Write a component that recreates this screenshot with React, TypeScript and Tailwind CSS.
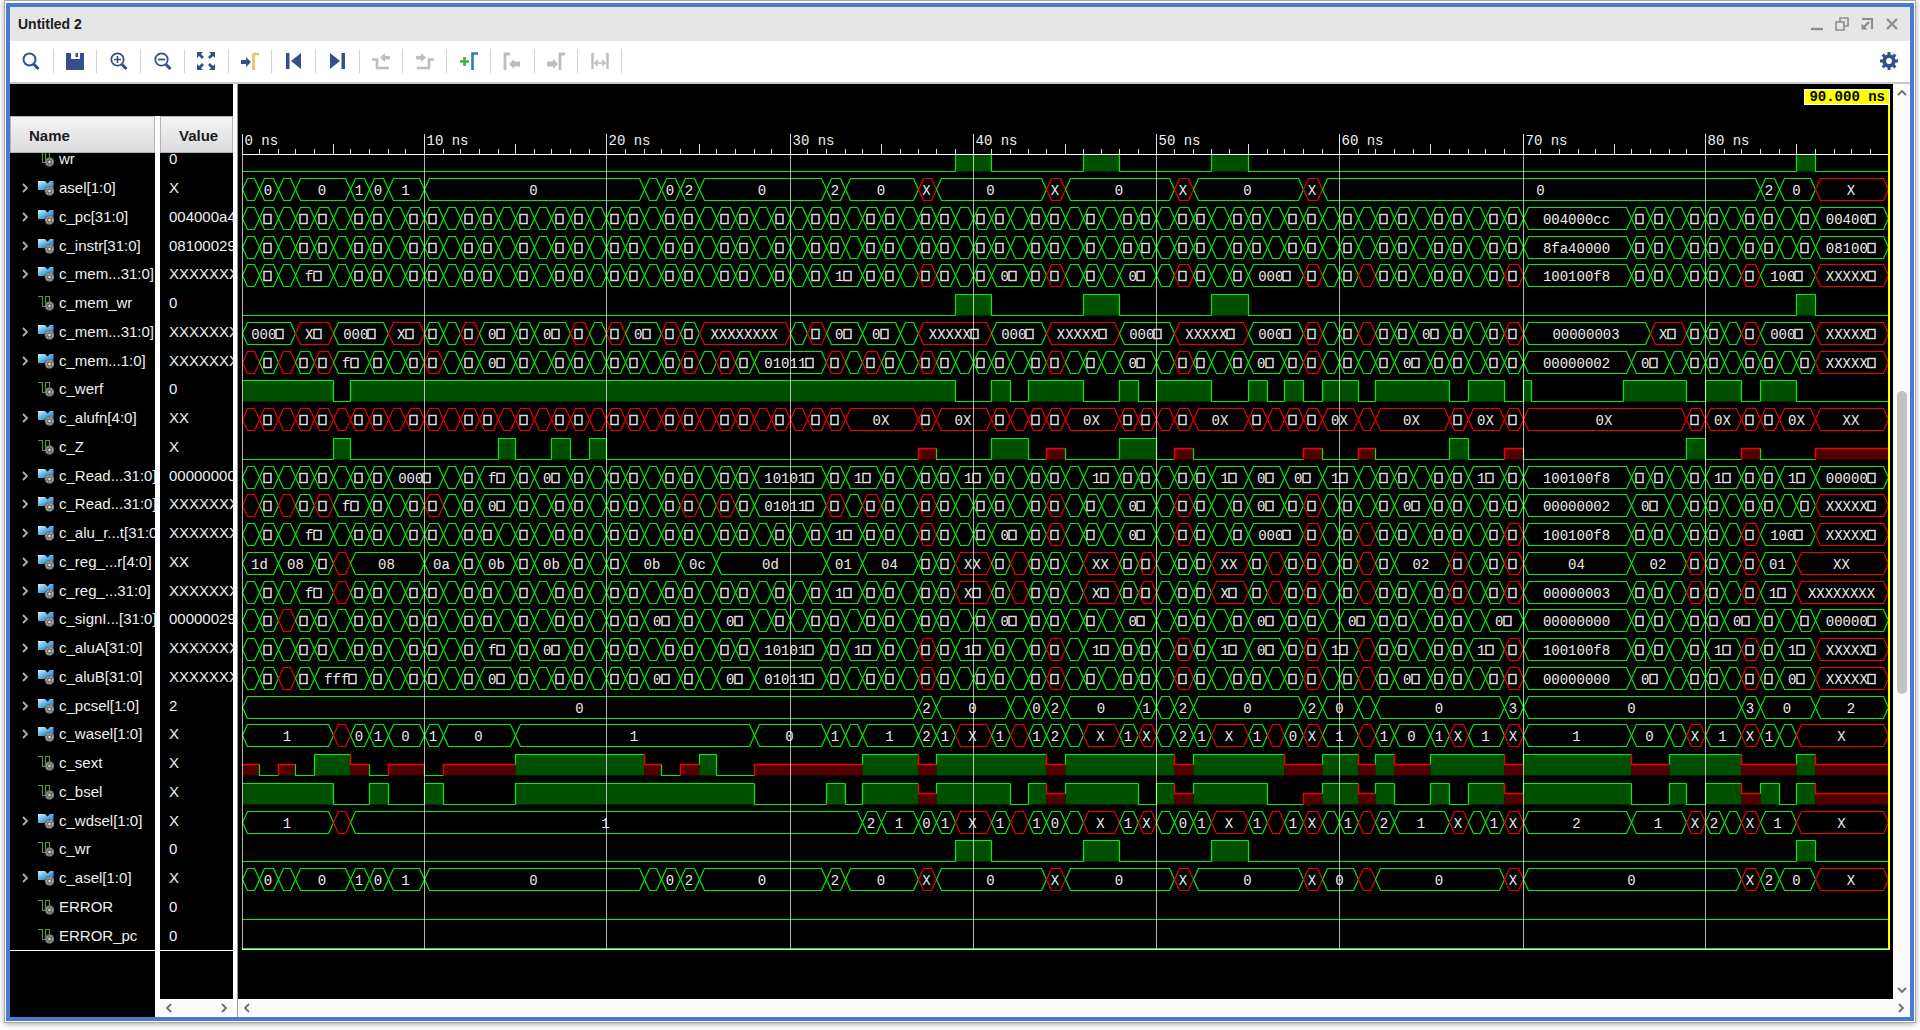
import { useLayoutEffect, useRef, useState } from "react";
import type { ReactNode } from "react";

type Signal = { name: string; value: string; kind: "bus" | "bit"; wave: string };

/*
 * Bus waves:  "*n" is n one-step values, "n:text" one value that lasts n steps, a leading
 *             "r" marks an undefined value.
 * Bit waves:  H, L or X followed by the number of steps.
 */
const WRITE_WAVE = "L39 H2 L5 H2 L5 H2 L30 H1 L4";
const ADDRESS_WAVE =
  "*3 2:f□ *27 2:1□ *3 r*1 *3 2:0□ *1 r*1 *3 2:0□ *1 r*1 *3 3:000□ r*1 *2 r*1 *7 r*1 6:100100f8 *6 r*1 3:100□ r4:XXXXX□";
const OPERAND_WAVE =
  "r*1 *1 r*1 *1 r*1 2:f□ *3 r*1 *2 2:0□ *9 r*1 *1 r*1 *1 4:01011□ r*1 *1 r*1 *2 r*1 *6 r*1 *3 2:0□ *1 r*1 *3 2:0□ *1 r*1 *4 2:0□ *5 6:00000002 2:0□ *8 r4:XXXXX□";

const SIGNALS: Signal[] = [
  { name: "wr", value: "0", kind: "bit", wave: WRITE_WAVE },
  {
    name: "asel[1:0]", value: "X", kind: "bus",
    wave: "1: 1:0 1: 3:0 1:1 1:0 2:1 12:0 1: 1:0 1:2 7:0 1:2 4:0 r1:X 6:0 r1:X 6:0 r1:X 6:0 r1:X 24:0 1:2 2:0 r4:X",
  },
  { name: "c_pc[31:0]", value: "004000a4", kind: "bus", wave: "*70 6:004000cc *10 4:00400□" },
  { name: "c_instr[31:0]", value: "08100029", kind: "bus", wave: "*70 6:8fa40000 *10 4:08100□" },
  { name: "c_mem...31:0]", value: "XXXXXXXX", kind: "bus", wave: ADDRESS_WAVE },
  { name: "c_mem_wr", value: "0", kind: "bit", wave: WRITE_WAVE },
  {
    name: "c_mem...31:0]", value: "XXXXXXXX", kind: "bus",
    wave: "3:000□ r2:X□ 3:000□ r2:X□ *2 r*1 2:0□ *1 2:0□ r*1 *1 r*1 2:0□ r*1 *1 r5:XXXXXXXX *1 r*1 2:0□ 2:0□ *1 r4:XXXXX□ 3:000□ r4:XXXXX□ 3:000□ r4:XXXXX□ 3:000□ r*1 *2 r*1 *2 2:0□ *3 r*1 7:00000003 r2:X□ *3 r*1 3:000□ r4:XXXXX□",
  },
  { name: "c_mem...1:0]", value: "XXXXXXXX", kind: "bus", wave: OPERAND_WAVE },
  {
    name: "c_werf", value: "0", kind: "bit",
    wave: "H5 L1 H33 L2 H1 L1 H3 L2 H1 L1 H3 L2 H1 L1 H1 L1 H2 L1 H4 L1 H2 L1 H0.5 L5 H3.5 L1 H2 L1 H2 L5",
  },
  {
    name: "c_alufn[4:0]", value: "XX", kind: "bus",
    wave: "r*33 r4:0X r*1 r3:0X r*4 r3:0X r*4 r3:0X r*4 r2:0X r*1 r4:0X r*1 r2:0X r*1 r9:0X r*1 r2:0X r*2 r2:0X r4:XX",
  },
  {
    name: "c_Z", value: "X", kind: "bit",
    wave: "L5 H1 L8 H1 L2 H1 L1 H1 L17 X1 L3 H2 L1 X1 L3 H2 L1 X1 L6 X1 L2 X1 L4 H1 L2 X1 L9 H1 L2 X1 L3 X4",
  },
  {
    name: "c_Read...31:0]", value: "00000000", kind: "bus",
    wave: "*8 3:000□ *2 2:f□ *1 2:0□ *10 4:10101□ *1 2:1□ *4 2:1□ *5 2:1□ *5 2:1□ 2:0□ 2:0□ 2:1□ *6 2:1□ *1 6:100100f8 *4 2:1□ *2 2:1□ 4:00000□",
  },
  { name: "c_Read...31:0]", value: "XXXXXXXX", kind: "bus", wave: OPERAND_WAVE },
  { name: "c_alu_r...t[31:0]", value: "XXXXXXXX", kind: "bus", wave: ADDRESS_WAVE },
  {
    name: "c_reg_...r[4:0]", value: "XX", kind: "bus",
    wave: "2:1d 2:08 *1 r*1 4:08 2:0a *1 2:0b *1 2:0b *3 3:0b 2:0c 6:0d 2:01 3:04 *2 r2:XX *1 r*1 *3 r2:XX *1 r*1 *3 r2:XX *1 r*1 *1 r*1 *2 r*1 *1 3:02 r*1 *2 r*1 6:04 3:02 r*1 *2 r*1 2:01 r5:XX",
  },
  {
    name: "c_reg_...31:0]", value: "XXXXXXXX", kind: "bus",
    wave: "*3 2:f□ r*1 *26 2:1□ *5 r2:X□ *1 r*1 *3 r2:X□ *1 r*1 *3 r2:X□ *1 r*1 *1 r*1 *2 r*1 *4 r*1 *2 r*1 6:00000003 *3 r*1 *2 r*1 2:1□ r5:XXXXXXXX",
  },
  {
    name: "c_signI...[31:0]", value: "00000029", kind: "bus",
    wave: "*2 r*1 *19 2:0□ *2 2:0□ *13 2:0□ *5 2:0□ *5 2:0□ *3 2:0□ *6 2:0□ 6:00000000 *5 2:0□ *3 4:00000□",
  },
  {
    name: "c_aluA[31:0]", value: "XXXXXXXX", kind: "bus",
    wave: "*13 2:f□ *1 2:0□ *10 4:10101□ *1 2:1□ *2 r*1 *1 2:1□ *3 r*1 *1 2:1□ *3 r*1 *1 2:1□ 2:0□ *1 r*1 2:1□ r*1 *5 2:1□ r*1 6:100100f8 *4 2:1□ r*1 *1 2:1□ r4:XXXXX□",
  },
  {
    name: "c_aluB[31:0]", value: "XXXXXXXX", kind: "bus",
    wave: "*2 r*1 *1 3:fff□ *6 2:0□ *7 2:0□ *2 2:0□ 4:01011□ *5 r*1 *6 r*1 *6 r*1 *6 r*1 *2 r*1 *1 2:0□ *4 r*1 6:00000000 2:0□ *4 r*1 *1 2:0□ r4:XXXXX□",
  },
  {
    name: "c_pcsel[1:0]", value: "2", kind: "bus",
    wave: "37:0 1:2 4:0 1: 1:0 1:2 4:0 1:1 1: 1:2 6:0 1:2 2:0 1: 7:0 1:3 12:0 1:3 3:0 4:2",
  },
  {
    name: "c_wasel[1:0]", value: "X", kind: "bus",
    wave: "5:1 r1: 1:0 1:1 2:0 1:1 4:0 13:1 4:0 1:1 1: 3:1 1:2 1:1 r2:X 1:1 r1: 1:1 1:2 1: r2:X 1:1 r1:X 1: 1:2 1:1 r2:X 1:1 r1: 1:0 r1:X 2:1 r1: 1:1 2:0 1:1 r1:X 2:1 r1:X 6:1 2:0 1: r1:X 2:1 r1:X 1:1 1: r5:X",
  },
  {
    name: "c_sext", value: "X", kind: "bit",
    wave: "X1 L1 X1 L1 H2 X1 L1 X2 L1 X4 H7 X1 L1 X1 H1 L2 X6 H3 X1 H6 X1 H6 X1 H5 X2 H2 X1 H1 X2 H4 X1 H6 X2 H4 X3 H1 X4",
  },
  {
    name: "c_bsel", value: "X", kind: "bit",
    wave: "H5 L2 H1 L2 H1 L4 H13 L4 H1 L1 H3 X1 H4 L1 H1 X1 H4 L1 H1 X1 H4 L2 X1 H2 X1 H1 L2 H1 L1 H2 X1 H6 L2 H1 L1 H2 X1 H1 L1 H1 X4",
  },
  {
    name: "c_wdsel[1:0]", value: "X", kind: "bus",
    wave: "5:1 r1: 28:1 1:2 2:1 1:0 1:1 r2:X 1:1 r1: 1:1 1:0 1: r2:X 1:1 r1:X 1: 1:0 1:1 r2:X 1:1 r1: 1:1 r1:X 1: 1:1 r1: 1:2 3:1 r1:X 1: 1:1 r1:X 6:2 3:1 r1:X 1:2 1: r1:X 2:1 r5:X",
  },
  { name: "c_wr", value: "0", kind: "bit", wave: WRITE_WAVE },
  {
    name: "c_asel[1:0]", value: "X", kind: "bus",
    wave: "1: 1:0 1: 3:0 1:1 1:0 2:1 12:0 1: 1:0 1:2 7:0 1:2 4:0 r1:X 6:0 r1:X 6:0 r1:X 6:0 r1:X 2:0 r1: 7:0 r1:X 12:0 r1:X 1:2 2:0 r4:X",
  },
  { name: "ERROR", value: "0", kind: "bit", wave: "L90" },
  { name: "ERROR_pc", value: "0", kind: "bit", wave: "L90" },
];

const STEPS = 90;
const NARROW = new Set([
  0, 2, 5, 8, 11, 14, 16, 19, 22, 25, 28, 30, 33, 36, 39, 42, 45, 47, 50, 53, 56, 59, 61, 64, 67, 70, 73, 75, 78, 81,
  84, 87, 89,
]);
const EDGES: number[] = [0];
for (let t = 0; t < STEPS; t++) EDGES.push(EDGES[t] + (NARROW.has(t) ? 11 : 12));

const GREEN = "#00ee00";
const RED = "#f00000";
const ROWS_HEIGHT = 805;
const PITCH = ROWS_HEIGHT / SIGNALS.length;
const RULER_Y = 70;
const ROWS_TOP = 62;
const END_Y = 865;
const LEFT = 4;
const RIGHT = 5;
const CHAR_WIDTH = 8.4;

type Scale = (t: number) => number;

function BusWave({ wave, cy, x }: { wave: string; cy: number; x: Scale }) {
  const parts: ReactNode[] = [];
  let t = 0;
  const add = (len: number, text: string, red: boolean) => {
    const a = x(t);
    const b = x(t + len);
    const top = cy - 11;
    const bottom = cy + 11;
    parts.push(
      <polygon
        key={`p${t}`}
        points={`${a},${cy} ${a + 5},${top} ${b - 5},${top} ${b},${cy} ${b - 5},${bottom} ${a + 5},${bottom}`}
        fill="none"
        stroke={red ? RED : GREEN}
        strokeWidth="1.2"
      />,
    );
    if (text && !(len === 1 && NARROW.has(t))) {
      const truncated = text.endsWith("□");
      const shown = truncated ? text.slice(0, -1) : text;
      const start = (a + b) / 2 - 1 - (text.length * CHAR_WIDTH) / 2;
      if (shown) {
        parts.push(
          <text key={`t${t}`} x={start} y={cy + 5} fill="#ececec">
            {shown}
          </text>,
        );
      }
      if (truncated) {
        parts.push(
          <rect
            key={`b${t}`}
            x={Math.round(start + shown.length * CHAR_WIDTH)}
            y={cy - 4}
            width="7"
            height="9"
            fill="none"
            stroke="#dedede"
            strokeWidth="1.5"
          />,
        );
      }
    }
    t += len;
  };
  for (const token of wave.split(" ")) {
    const red = token.startsWith("r");
    const body = red ? token.slice(1) : token;
    if (body.startsWith("*")) {
      for (let n = Number(body.slice(1)); n > 0; n--) add(1, "□", red);
    } else {
      const [len, text] = body.split(":");
      add(Number(len), text, red);
    }
  }
  return <g>{parts}</g>;
}

function BitWave({ wave, cy, x }: { wave: string; cy: number; x: Scale }) {
  const high = cy - 10;
  const low = cy + 11;
  const levels: Record<string, number> = { H: high, L: low, X: cy };
  const parts: ReactNode[] = [];
  let t = 0;
  let previous: number | null = null;
  for (const token of wave.split(" ")) {
    const state = token[0];
    const len = Number(token.slice(1));
    const y = levels[state];
    const a = x(t);
    const b = x(t + len);
    if (state !== "L") {
      parts.push(
        <rect key={`f${t}`} x={a} y={y} width={b - a} height={low - y} fill={state === "X" ? "#500000" : "#004e00"} />,
      );
    }
    parts.push(
      <path
        key={`l${t}`}
        d={previous === null ? `M${a} ${y}H${b}` : `M${a} ${previous}V${y}H${b}`}
        fill="none"
        stroke={state === "X" ? RED : GREEN}
        strokeWidth={state === "X" ? 1.5 : 1.2}
      />,
    );
    previous = y;
    t += len;
  }
  return <g>{parts}</g>;
}

function WaveCanvas() {
  const ref = useRef<HTMLDivElement>(null);
  const [width, setWidth] = useState(1655);
  useLayoutEffect(() => {
    const node = ref.current;
    if (!node) return;
    const measure = () => setWidth(node.clientWidth);
    measure();
    const observer = new ResizeObserver(measure);
    observer.observe(node);
    return () => observer.disconnect();
  }, []);

  const plot = width - LEFT - RIGHT;
  const x: Scale = (t) => {
    const i = Math.floor(t);
    const edge = i === t ? EDGES[i] : (EDGES[i] + EDGES[i + 1]) / 2;
    return LEFT + Math.floor((edge / EDGES[STEPS]) * plot) + 0.5;
  };
  const ticks = Array.from({ length: STEPS + 1 }, (_, t) => t);

  return (
    <div ref={ref} className="relative min-w-0 flex-1 overflow-hidden bg-black">
      <svg
        width={width}
        height={END_Y + 2}
        className="block font-['Liberation_Mono',monospace] text-[14px]"
        role="img"
        aria-label="Waveforms from 0 ns to 90 ns"
      >
        <clipPath id="below-ruler">
          <rect x="0" y={RULER_Y} width={width} height={END_Y - RULER_Y + 2} />
        </clipPath>
        <g clipPath="url(#below-ruler)">
          {SIGNALS.map((signal, i) => {
            const cy = Math.round(ROWS_TOP + PITCH * (i + 0.5)) + 0.5;
            return signal.kind === "bus" ? (
              <BusWave key={i} wave={signal.wave} cy={cy} x={x} />
            ) : (
              <BitWave key={i} wave={signal.wave} cy={cy} x={x} />
            );
          })}
        </g>
        <path d={`M${LEFT} ${END_Y + 0.5}H${x(STEPS)}`} stroke="#eaffea" />
        <path d={`M${LEFT} ${END_Y - 0.5}H${x(STEPS)}`} stroke={GREEN} />
        <path d={`M${LEFT} ${RULER_Y + 0.5}H${x(STEPS)}`} stroke="#ffffff" strokeWidth="1.2" />
        {ticks.map((t) => (
          <path
            key={t}
            d={`M${x(t)} ${t % 10 === 0 ? 50 : t % 5 === 0 ? 60 : 65}V${RULER_Y}`}
            stroke="#e0e0e0"
          />
        ))}
        {ticks
          .filter((t) => t % 10 === 0 && t < STEPS)
          .map((t) => (
            <g key={t}>
              <path d={`M${x(t)} ${RULER_Y}V${END_Y}`} stroke="#ffffff" strokeOpacity="0.7" />
              <text x={x(t) + 2} y="61" fill="#f0f0f0">
                {t} ns
              </text>
            </g>
          ))}
        <path d={`M${x(STEPS) + 0.5} 19V${END_Y + 1}`} stroke="#ffff00" strokeWidth="2" />
      </svg>
      <div className="absolute top-[5px] right-[3px] border border-white bg-[#ffff00] px-1 font-['Liberation_Mono',monospace] text-[14px] leading-[14px] font-bold text-black">
        90.000 ns
      </div>
    </div>
  );
}

function BusIcon() {
  return (
    <svg width="16" height="16" viewBox="0 0 16 16" aria-hidden="true">
      <defs>
        <linearGradient id="bus" x1="0" y1="0" x2="1" y2="1">
          <stop offset="0" stopColor="#d8efff" />
          <stop offset="0.55" stopColor="#4fa8e0" />
          <stop offset="1" stopColor="#1479bd" />
        </linearGradient>
      </defs>
      <path d="M0 1H7L9.5 3.5L12 1H15.5V10H10L8 9L6 10H0Z" fill="url(#bus)" />
      <circle cx="11.5" cy="11" r="4.8" fill="#6a6a6a" />
      <circle cx="11.5" cy="11" r="3.2" fill="none" stroke="#a9a9a9" strokeWidth="1.5" strokeDasharray="2 1" />
      <circle cx="11.5" cy="11" r="1.2" fill="#e8e8e8" />
    </svg>
  );
}

function BitIcon() {
  return (
    <svg width="16" height="16" viewBox="0 0 16 16" aria-hidden="true">
      <path d="M0 1.5H4.5V11.5H7.5V1.5H11.5V8" fill="none" stroke="#5c8f4c" strokeWidth="1.2" />
      <circle cx="11.5" cy="11" r="4.8" fill="#5f5f5f" />
      <circle cx="11.5" cy="11" r="3.2" fill="none" stroke="#9c9c9c" strokeWidth="1.5" strokeDasharray="2 1" />
      <circle cx="11.5" cy="11" r="1.2" fill="#dddddd" />
    </svg>
  );
}

function Chevron({ direction, stroke = "#6e6e6e" }: { direction: "left" | "right" | "up" | "down"; stroke?: string }) {
  const paths = {
    left: "M8 2L4 6L8 10",
    right: "M4 2L8 6L4 10",
    up: "M2 8L6 4L10 8",
    down: "M2 4L6 8L10 4",
  };
  return (
    <svg width="12" height="12" viewBox="0 0 12 12" aria-hidden="true">
      <path d={paths[direction]} fill="none" stroke={stroke} strokeWidth="1.8" />
    </svg>
  );
}

const NAVY = "#34508a";
const MUTED = "#bdbdbd";
const TOOLS: { label: string; disabled?: boolean; icon: ReactNode }[] = [
  {
    label: "Find",
    icon: (
      <g fill="none" stroke={NAVY}>
        <circle cx="7.5" cy="7.5" r="6" strokeWidth="2" />
        <path d="M12 12.5L16.5 17" strokeWidth="3" />
      </g>
    ),
  },
  {
    label: "Save",
    icon: (
      <g fill={NAVY}>
        <path d="M0 1H5V7H14V1H18V18H0Z" />
        <path d="M9.5 1H12V5H9.5Z" />
      </g>
    ),
  },
  {
    label: "Zoom in",
    icon: (
      <g fill="none" stroke={NAVY}>
        <circle cx="7.5" cy="7.5" r="6.2" strokeWidth="1.8" />
        <path d="M12 12.5L16.5 17" strokeWidth="3" />
        <path d="M4 7.5H11M7.5 4V11" strokeWidth="1.6" />
      </g>
    ),
  },
  {
    label: "Zoom out",
    icon: (
      <g fill="none" stroke={NAVY}>
        <circle cx="7.5" cy="7.5" r="6.2" strokeWidth="1.8" />
        <path d="M12 12.5L16.5 17" strokeWidth="3" />
        <path d="M4 7.5H11" strokeWidth="1.8" />
      </g>
    ),
  },
  {
    label: "Zoom fit",
    icon: (
      <g fill={NAVY}>
        <path d="M0 0H6L4 2L7 5L5 7L2 4L0 6Z" />
        <path d="M18 0V6L16 4L13 7L11 5L14 2L12 0Z" />
        <path d="M0 18V12L2 14L5 11L7 13L4 16L6 18Z" />
        <path d="M18 18H12L14 16L11 13L13 11L16 14L18 12Z" />
      </g>
    ),
  },
  {
    label: "Go to cursor",
    icon: (
      <g>
        <path d="M0 8H5V5L10 10L5 15V12H0Z" fill={NAVY} />
        <path d="M18 2H12.5V18" fill="none" stroke="#e2c55c" strokeWidth="2.6" />
      </g>
    ),
  },
  {
    label: "Go to start",
    icon: <path d="M1 1H4.5V17H1ZM16 1V17L6 9Z" fill={NAVY} />,
  },
  {
    label: "Go to end",
    icon: <path d="M17 1H13.5V17H17ZM2 1V17L12 9Z" fill={NAVY} />,
  },
  {
    label: "Previous transition",
    disabled: true,
    icon: (
      <g>
        <path d="M0 7.5H5V16H17" fill="none" stroke={MUTED} strokeWidth="2.6" />
        <path d="M8 5.5L13 1V4H18V7.5H13V10Z" fill={MUTED} />
      </g>
    ),
  },
  {
    label: "Next transition",
    disabled: true,
    icon: (
      <g>
        <path d="M18 7.5H13V16H1" fill="none" stroke={MUTED} strokeWidth="2.6" />
        <path d="M10 5.5L5 1V4H0V7.5H5V10Z" fill={MUTED} />
      </g>
    ),
  },
  {
    label: "Add marker",
    icon: (
      <g fill="none">
        <path d="M0 9.5H9M4.5 5V14" stroke="#37b34a" strokeWidth="2.6" />
        <path d="M18 1.5H12.5V18" stroke="#2e80ab" strokeWidth="2.6" />
      </g>
    ),
  },
  {
    label: "Previous marker",
    disabled: true,
    icon: (
      <g>
        <path d="M7 2H2V18" fill="none" stroke={MUTED} strokeWidth="2.8" />
        <path d="M6 12L11 7V9.5H17V14.5H11V17Z" fill={MUTED} />
      </g>
    ),
  },
  {
    label: "Next marker",
    disabled: true,
    icon: (
      <g>
        <path d="M18 2H13V18" fill="none" stroke={MUTED} strokeWidth="2.8" />
        <path d="M11 12L6 7V9.5H0V14.5H6V17Z" fill={MUTED} />
      </g>
    ),
  },
  {
    label: "Swap cursors",
    disabled: true,
    icon: (
      <g fill="none" stroke={MUTED}>
        <path d="M1.5 1V17M16.5 1V17" strokeWidth="2.4" />
        <path d="M4 11H14M7 8L4 11L7 14M11 8L14 11L11 14" strokeWidth="1.6" />
      </g>
    ),
  },
];

const WINDOW_BUTTONS: { label: string; path: ReactNode }[] = [
  { label: "Minimize", path: <path d="M1 12H13" strokeWidth="2.4" /> },
  { label: "Restore", path: <path d="M5 5V1H13V9H9M1 5H9V13H1Z" strokeWidth="1.6" /> },
  {
    label: "Maximize",
    path: (
      <g>
        <path d="M2 2H12V12" strokeWidth="2.2" />
        <path d="M9 5L4 10" strokeWidth="2.4" />
        <path d="M1.5 6.5V12.5H7.5Z" fill="#8c8c8c" stroke="none" />
      </g>
    ),
  },
  { label: "Close", path: <path d="M2 2L12 12M12 2L2 12" strokeWidth="2.4" /> },
];

function TitleBar() {
  return (
    <header className="flex h-[34px] shrink-0 items-center justify-between bg-[#e6e6e6] pr-[11px] pl-2">
      <h1 className="text-[14px] font-bold text-[#1c1c1c]">Untitled 2</h1>
      <div className="flex gap-[11px]">
        {WINDOW_BUTTONS.map((button) => (
          <button key={button.label} type="button" aria-label={button.label}>
            <svg width="14" height="14" viewBox="0 0 14 14" fill="none" stroke="#8c8c8c" aria-hidden="true">
              {button.path}
            </svg>
          </button>
        ))}
      </div>
    </header>
  );
}

function Toolbar() {
  return (
    <div className="flex h-[43px] shrink-0 items-center justify-between border-b-2 border-[#c9c9c9] bg-white pr-3 pb-[2px]" role="toolbar">
      <div className="flex w-[612px]">
        {TOOLS.map((tool) => (
          <button
            key={tool.label}
            type="button"
            aria-label={tool.label}
            disabled={tool.disabled}
            className="flex h-6 flex-1 items-center justify-center border-r border-[#d4d4d4]"
          >
            <svg width="18" height="18" viewBox="0 0 18 18" aria-hidden="true">
              {tool.icon}
            </svg>
          </button>
        ))}
      </div>
      <button type="button" aria-label="Settings">
        <svg width="18" height="18" viewBox="0 0 18 18" fill="none" stroke={NAVY} aria-hidden="true">
          <circle cx="9" cy="9" r="4.8" strokeWidth="3.8" />
          <path
            d="M9 0V3M9 15V18M0 9H3M15 9H18M2.6 2.6L4.8 4.8M13.2 13.2L15.4 15.4M2.6 15.4L4.8 13.2M13.2 4.8L15.4 2.6"
            strokeWidth="3"
          />
        </svg>
      </button>
    </div>
  );
}

function SignalTable() {
  return (
    <section className="flex w-[223px] shrink-0 flex-col bg-white">
      <div className="h-8 shrink-0 bg-black" />
      <table className="block shrink-0 overflow-hidden text-left text-[15px] leading-5">
        <thead className="relative z-10 block">
          <tr className="grid h-[37px] grid-cols-[145px_73px] gap-[5px] bg-white">
            <th className="flex items-center border border-[#b4b4b4] bg-linear-to-b from-[#f4f4f4] to-[#dcdcde] pt-[2px] pl-[18px] font-bold text-[#1c1c1c]">
              Name
            </th>
            <th className="flex items-center border border-[#b4b4b4] bg-linear-to-b from-[#f4f4f4] to-[#dcdcde] pt-[2px] pl-[18px] font-bold text-[#1c1c1c]">
              Value
            </th>
          </tr>
        </thead>
        <tbody className="-mt-2 grid h-[805px] auto-rows-fr text-[#f0f0f0]">
          {SIGNALS.map((signal, i) => (
            <tr key={i} className="grid min-h-0 grid-cols-[145px_73px] gap-[5px]">
              <td className="flex min-w-0 items-center overflow-hidden bg-black whitespace-nowrap">
                <span className="flex w-7 shrink-0 justify-end pr-[7px]">
                  {signal.kind === "bus" && (
                    <button type="button" aria-label={`Expand ${signal.name}`}>
                      <Chevron direction="right" stroke="#b0b0b0" />
                    </button>
                  )}
                </span>
                <span className="mr-[5px] shrink-0">{signal.kind === "bus" ? <BusIcon /> : <BitIcon />}</span>
                {signal.name}
              </td>
              <td className="flex min-w-0 items-center overflow-hidden bg-black pl-[9px] whitespace-nowrap">
                {signal.value}
              </td>
            </tr>
          ))}
        </tbody>
      </table>
      <div className="grid min-h-0 flex-1 grid-cols-[145px_73px] gap-[5px]">
        <div className="border-t border-white bg-black" />
        <div className="flex flex-col border-t border-white bg-black">
          <div className="flex-1" />
          <div className="flex h-[18px] items-center justify-between bg-[#fafafa] px-[3px]">
            <button type="button" aria-label="Scroll values left">
              <Chevron direction="left" />
            </button>
            <button type="button" aria-label="Scroll values right">
              <Chevron direction="right" />
            </button>
          </div>
        </div>
      </div>
    </section>
  );
}

function WavePane() {
  return (
    <section className="flex min-w-0 flex-1 flex-col border-l border-[#9a9a9a]">
      <div className="flex min-h-0 flex-1">
        <WaveCanvas />
        <div className="flex w-[17px] shrink-0 flex-col items-center bg-[#fafafa] py-[3px]">
          <button type="button" aria-label="Scroll up">
            <Chevron direction="up" />
          </button>
          <div className="min-h-0 flex-[291] shrink" />
          <div className="w-[10px] flex-[303] rounded-full bg-[#c1c1c1]" />
          <div className="min-h-0 flex-[289]" />
          <button type="button" aria-label="Scroll down">
            <Chevron direction="down" />
          </button>
        </div>
      </div>
      <div className="flex h-[18px] shrink-0 items-center justify-between bg-[#fafafa] px-[3px]">
        <button type="button" aria-label="Scroll waveforms left">
          <Chevron direction="left" />
        </button>
        <button type="button" aria-label="Scroll waveforms right">
          <Chevron direction="right" />
        </button>
      </div>
    </section>
  );
}

export default function App() {
  return (
    <div className="flex h-screen overflow-hidden bg-white pr-1 pb-[7px] pl-1 font-['Liberation_Sans',Arial,sans-serif]">
      <div className="flex min-w-0 flex-1 border border-[#a6a6a6] bg-white px-px pt-[2px] pb-px shadow-[0_1px_6px_rgba(0,0,0,0.35)]">
        <main className="flex min-w-0 flex-1 flex-col border-4 border-[#4a7bce] bg-white">
          <TitleBar />
          <Toolbar />
          <div className="flex min-h-0 flex-1 gap-1">
            <SignalTable />
            <WavePane />
          </div>
        </main>
      </div>
    </div>
  );
}
